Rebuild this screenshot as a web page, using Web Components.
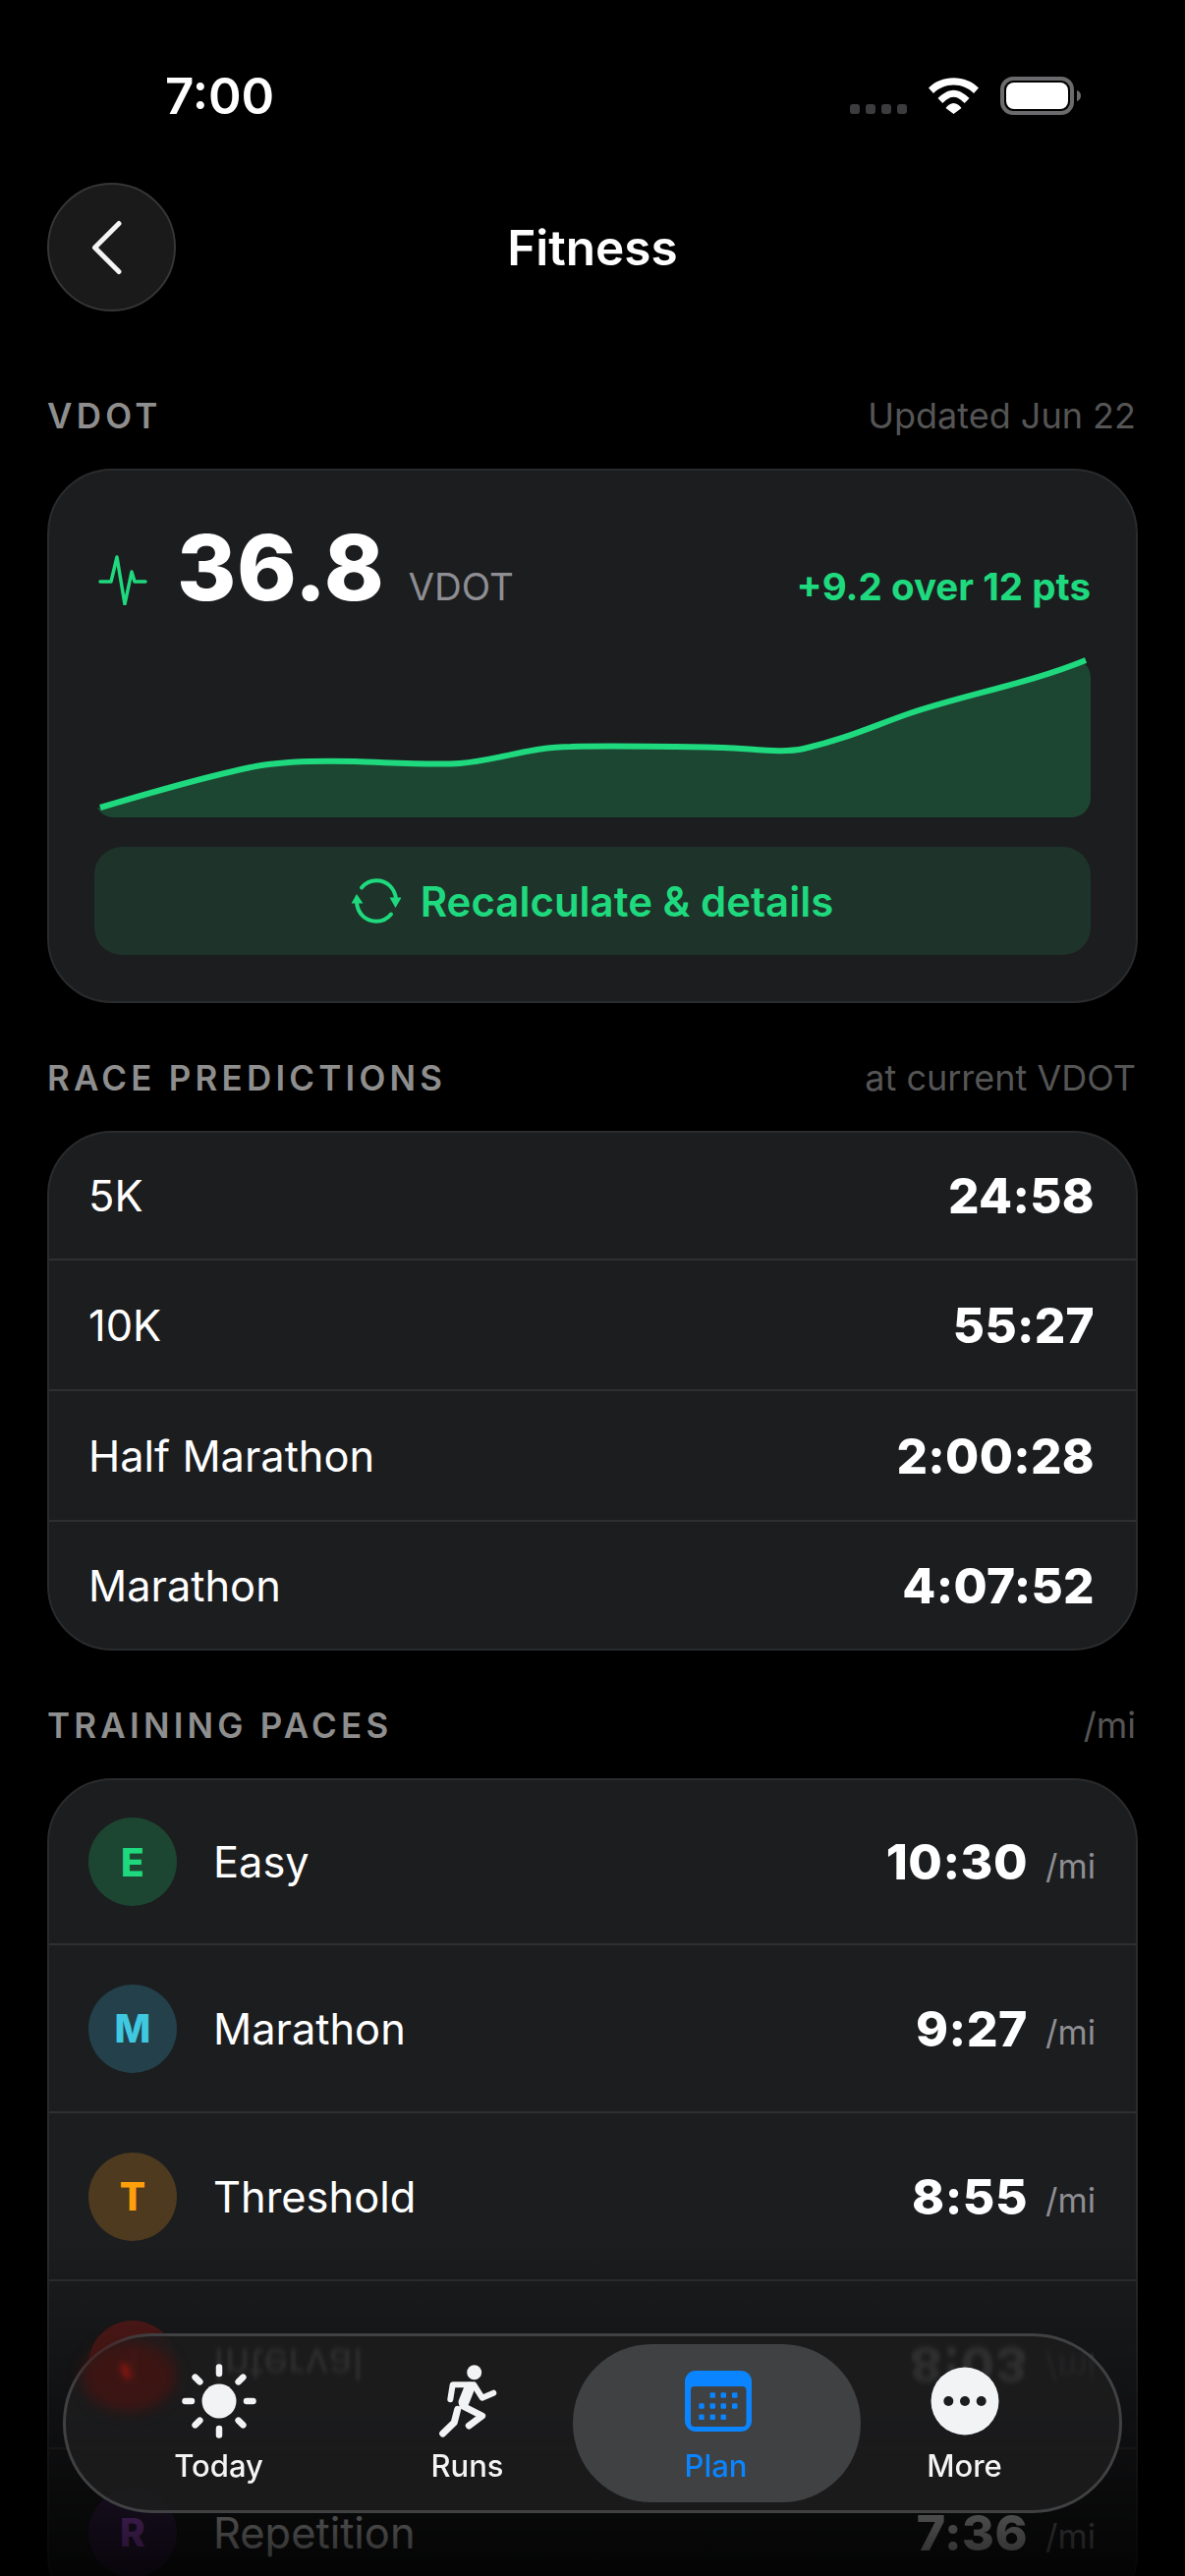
<!doctype html>
<html>
<head>
<meta charset="utf-8">
<style>
  html, body { margin: 0; padding: 0; background: #000; }
  body { font-family: Inter, "Liberation Sans", sans-serif; color: #fff; }
</style>
</head>
<body>
<fit-screen>
  <status-bar></status-bar>
  <nav-header>Fitness</nav-header>

  <section-head label="VDOT" note="Updated Jun 22"></section-head>
  <vdot-card></vdot-card>

  <section-head label="RACE PREDICTIONS" note="at current VDOT" class="later"></section-head>
  <list-card>
    <race-row name="5K" time="24:58"></race-row>
    <race-row name="10K" time="55:27"></race-row>
    <race-row name="Half Marathon" time="2:00:28"></race-row>
    <race-row name="Marathon" time="4:07:52"></race-row>
  </list-card>

  <section-head label="TRAINING PACES" note="/mi" class="later"></section-head>
  <list-card>
    <pace-row letter="E" name="Easy" time="10:30" tint="#1d4632" tone="#1fd97e"></pace-row>
    <pace-row letter="M" name="Marathon" time="9:27" tint="#23404b" tone="#40c8e0"></pace-row>
    <pace-row letter="T" name="Threshold" time="8:55" tint="#4d3a1f" tone="#ff9f0a"></pace-row>
    <pace-row letter="I" name="Interval" time="8:03" tint="#5a1d1b" tone="#ff453a" flipped></pace-row>
    <pace-row letter="R" name="Repetition" time="7:36" tint="#3d2450" tone="#bf5af2"></pace-row>
  </list-card>

  <tab-bar slot="overlay">
    <tab-item label="Today">
      <svg viewBox="0 0 76 76" width="76" height="76" fill="#f2f3f5">
        <circle cx="38" cy="38" r="17.5"/>
        <g stroke="#f2f3f5" stroke-width="6.5" stroke-linecap="round">
          <path d="M38 3.500v6.500M38 66v6.500M3.500 38H10M66 38h6.500M13.600 13.600l4.800 4.800M57.600 57.600l4.800 4.800M13.600 62.400l4.800-4.800M57.600 18.400l4.800-4.800"/>
        </g>
      </svg>
    </tab-item>
    <tab-item label="Runs">
      <svg viewBox="0 0 76 76" width="76" height="76" fill="#f2f3f5">
        <circle cx="44.700" cy="8.700" r="7.500"/>
        <g fill="none" stroke="#f2f3f5" stroke-linecap="round" stroke-linejoin="round">
          <path stroke-width="11" d="M40 24 34 39"/>
          <path stroke-width="6" d="M20.300 36.300 22.700 21.300H44.300L52.700 34.700 64.300 29.700"/>
          <path stroke-width="7" d="M33 43 52.700 53 39.300 63"/>
          <path stroke-width="7" d="M27.700 46.300 24.300 59.700 12.700 71"/>
        </g>
      </svg>
    </tab-item>
    <tab-item label="Plan" active>
      <svg viewBox="0 0 68 62" width="68" height="62" style="margin-left:4px">
        <rect x="0" y="0" width="68" height="62" rx="11" fill="#0a84ff"/>
        <rect x="6" y="16" width="56.500" height="41" rx="4" fill="#3f4142"/>
        <g fill="#0a84ff">
          <rect x="25.500" y="22.250" width="5.500" height="5.500" rx="1.200"/><rect x="36.500" y="22.250" width="5.500" height="5.500" rx="1.200"/><rect x="48" y="22.250" width="5.500" height="5.500" rx="1.200"/>
          <rect x="14.250" y="33.250" width="5.500" height="5.500" rx="1.200"/><rect x="25.500" y="33.250" width="5.500" height="5.500" rx="1.200"/><rect x="36.500" y="33.250" width="5.500" height="5.500" rx="1.200"/><rect x="48" y="33.250" width="5.500" height="5.500" rx="1.200"/>
          <rect x="14.250" y="44.500" width="5.500" height="5.500" rx="1.200"/><rect x="25.500" y="44.500" width="5.500" height="5.500" rx="1.200"/><rect x="36.500" y="44.500" width="5.500" height="5.500" rx="1.200"/>
        </g>
      </svg>
    </tab-item>
    <tab-item label="More">
      <svg viewBox="0 0 70 70" width="70" height="70">
        <circle cx="35" cy="35" r="34.500" fill="#f2f3f5"/>
        <g fill="#1c1d1e"><circle cx="18.300" cy="35" r="5"/><circle cx="35" cy="35" r="5"/><circle cx="51.700" cy="35" r="5"/></g>
      </svg>
    </tab-item>
  </tab-bar>
</fit-screen>

<script>
  // Every element keeps its own markup and style in the shadow root
  function shadow (el, html) {
    el.attachShadow({ mode: 'open' }).innerHTML = html
  }

  // ------------------
  // Screen frame
  // ------------------
  class FitScreen extends HTMLElement {
    connectedCallback () {
      shadow(this, `
        <style>
          :host { display: block; position: relative; width: 1206px; height: 2622px; overflow: hidden; background: #000; }
          .page { padding: 0 48px; }
          .fade { position: absolute; left: 0; right: 0; top: 2280px; bottom: 0; pointer-events: none;
                  background: linear-gradient(to bottom, rgba(0,0,0,0), rgba(0,0,0,.86)); }
        </style>
        <div class="page"><slot></slot></div>
        <div class="fade"></div>
        <slot name="overlay"></slot>
      `)
    }
  }

  class StatusBar extends HTMLElement {
    connectedCallback () {
      shadow(this, `
        <style>
          :host { display: flex; align-items: center; justify-content: space-between; height: 186px; box-sizing: border-box; padding: 0 96px 0 168px; margin: 0 -48px; }
          .time { font-size: 51px; font-weight: 600; line-height: 1; margin-top: 8px; }
          svg { display: block; margin-top: 8px; }
        </style>
        <span class="time">7:00</span>
        <svg width="250" height="42" viewBox="0 0 250 42">
          <g fill="#3c3c3e">
            <rect x="5" y="30" width="10" height="10" rx="3"/><rect x="21" y="30" width="10" height="10" rx="3"/><rect x="37" y="30" width="10" height="10" rx="3"/><rect x="53" y="30" width="10" height="10" rx="3"/>
          </g>
          <path fill="#fff" d="M85 13.500C91.500 7 100.500 3.300 110.500 3.300S129.500 7 136 13.500l-5 5.500C125.500 13.500 118.500 10.500 110.500 10.500S95.500 13.500 90 19zM94.500 24c4-4 9.800-8.300 16-8.300s12 4.300 16 8.300l-4.800 5c-2.800-2.700-6.800-6.300-11.200-6.300s-8.400 3.600-11.200 6.300zM102.500 34c2-2.700 4.800-5 8-5s6 2.300 8 5l-8 6z"/>
          <rect x="160" y="4" width="71" height="35" rx="11" fill="none" stroke="#6b6b6d" stroke-width="4"/>
          <rect x="164" y="8" width="63" height="27" rx="8" fill="#fff"/>
          <path fill="#6b6b6d" d="M236 16c2.500.8 4 2.800 4 5.500s-1.500 4.700-4 5.500z"/>
        </svg>
      `)
    }
  }

  class NavHeader extends HTMLElement {
    connectedCallback () {
      shadow(this, `
        <style>
          :host { display: grid; grid-template-columns: 131px 1fr 131px; align-items: center; height: 131px; }
          .back { box-sizing: border-box; width: 131px; height: 131px; border-radius: 50%; background: #1a1a1b; border: 2px solid #363637; display: flex; align-items: center; justify-content: center; }
          .title { text-align: center; font-size: 49.500px; font-weight: 600; }
        </style>
        <div class="back">
          <svg width="32" height="56" viewBox="0 0 32 56" style="margin-left:-9px"><path d="M28 3.500 3.500 28 28 52.500" fill="none" stroke="#f4f4f4" stroke-width="5" stroke-linecap="round" stroke-linejoin="round"/></svg>
        </div>
        <div class="title"><slot></slot></div>
        <div></div>
      `)
    }
  }

  class SectionHead extends HTMLElement {
    connectedCallback () {
      shadow(this, `
        <style>
          :host { display: flex; align-items: center; justify-content: space-between; height: 44px; margin: 84px 0 32px; }
          :host(.later) { margin-top: 54px; }
          .label { font-size: 35px; font-weight: 600; letter-spacing: 4.200px; color: #8e8e8e; }
          .note { font-size: 36px; color: #555; margin-right: 2px; }
        </style>
        <span class="label">${this.getAttribute('label')}</span>
        <span class="note">${this.getAttribute('note')}</span>
      `)
    }
  }

  // ------------------
  // VDOT card
  // ------------------
  class VdotCard extends HTMLElement {
    connectedCallback () {
      const curve = 'M6 152C70 133 130 116 170 109C195 105 225 104 265 105C300 106 340 109 372 107C410 104 445 90 485 90C530 89 590 90 640 91C670 92 700 97 722 92C765 82 790 70 830 56C890 36 950 26 1009 2'
      shadow(this, `
        <style>
          :host { display: block; box-sizing: border-box; height: 544px; background: #1c1d1f; border: 2px solid #2a2b2d; border-radius: 66px; padding: 46px 46px 0; color: #fff; }
          .top { display: flex; align-items: center; height: 100px; padding-left: 4px; }
          .pulse { margin-top: 30px; }
          .num { font-size: 92px; font-weight: 800; margin-left: 30px; margin-top: 6px; line-height: 1; letter-spacing: .5px; }
          .unit { font-size: 38.500px; color: #8e8e93; margin-left: 24px; margin-top: 44px; }
          .delta { margin-left: auto; font-size: 38.600px; font-weight: 700; color: #1fd97e; margin-top: 44px; }
          .chart { display: block; margin-top: 45px; overflow: visible; }
          .btn { display: flex; align-items: center; justify-content: center; gap: 20px; height: 110px; margin-top: 30px; border-radius: 28px; background: #1e3329; color: #1fd97e; font-size: 42px; font-weight: 600; }
        </style>
        <div class="top">
          <svg class="pulse" width="50" height="52" viewBox="0 0 50 52"><path d="M2 28h11l6-25 8 48 7-33 3 10h11" fill="none" stroke="#1fd97e" stroke-width="3.500" stroke-linecap="round" stroke-linejoin="round"/></svg>
          <span class="num">36.8</span>
          <span class="unit">VDOT</span>
          <span class="delta">+9.2 over 12 pts</span>
        </div>
        <svg class="chart" width="1014" height="162" viewBox="0 0 1014 162">
          <defs><clipPath id="round"><rect x="0" y="0" width="1014" height="162" rx="20"/></clipPath></defs>
          <path clip-path="url(#round)" fill="#1d4632" d="${curve}L1014 2V162H0V152z"/>
          <path fill="none" stroke="#1fd97e" stroke-width="6" stroke-linejoin="round" d="${curve}"/>
        </svg>
        <div class="btn">
          <svg width="50" height="46" viewBox="0 0 50 46" fill="none" stroke="#1fd97e" stroke-width="4" stroke-linecap="round">
            <path d="M10 9.500C14 4.500 19.500 2.200 25 2.200c11 0 19 8 20 19"/>
            <path d="M40 36.500C36 41.500 30.500 43.800 25 43.800c-11 0-19-8-20-19"/>
            <path fill="#1fd97e" stroke="none" d="M38.500 19.500h12l-6 10.500zM-.5 25.500h12L5 16z"/>
          </svg>
          <span>Recalculate &amp; details</span>
        </div>
      `)
    }
  }

  // ------------------
  // Lists
  // ------------------
  class ListCard extends HTMLElement {
    connectedCallback () {
      shadow(this, `
        <style>
          :host { display: flex; flex-direction: column; background: #1c1d1f; border: 2px solid #2a2b2d; border-radius: 66px; box-sizing: border-box; overflow: hidden; color: #fff; }
        </style>
        <slot></slot>
      `)
    }
  }

  class RaceRow extends HTMLElement {
    connectedCallback () {
      shadow(this, `
        <style>
          :host { display: flex; align-items: center; justify-content: space-between; height: 133px; box-sizing: border-box; padding: 0 42px 0 40px; border-bottom: 2px solid #2e2f31; }
          :host(:first-child) { height: 130px; }
          :host(:last-child) { height: 129px; border-bottom: 0; }
          .name { font-size: 43.400px; }
          .time { font-size: 49.500px; font-weight: 800; letter-spacing: .3px; }
        </style>
        <span class="name">${this.getAttribute('name')}</span>
        <span class="time">${this.getAttribute('time')}</span>
      `)
    }
  }

  class PaceRow extends HTMLElement {
    connectedCallback () {
      const flip = this.hasAttribute('flipped') ? 'flip' : ''
      shadow(this, `
        <style>
          :host { display: flex; align-items: center; height: 171px; flex: none; box-sizing: border-box; padding: 0 42px 0 40px; border-bottom: 2px solid #2e2f31; }
          :host(:first-child) { height: 168px; }
          .dot { width: 90px; height: 90px; border-radius: 50%; display: flex; align-items: center; justify-content: center; font-size: 39px; font-weight: 800; flex: none; }
          .name { font-size: 43.400px; margin-left: 37px; }
          .time { margin-left: auto; font-size: 50px; font-weight: 800; letter-spacing: .5px; }
          .unit { font-size: 34.500px; color: #8e8e93; margin-left: 18px; width: 50px; margin-top: 8px; }
          /* this row sits under the glass bar, which throws it back upside down */
          .flip { transform: scaleY(-1); filter: url(#smear); }
        </style>
        <svg width="0" height="0" style="position:absolute"><filter id="smear"><feGaussianBlur stdDeviation="0.8 2.5"/></filter></svg>
        <span class="dot" style="background:${this.getAttribute('tint')};color:${this.getAttribute('tone')}">${this.getAttribute('letter')}</span>
        <span class="name ${flip}">${this.getAttribute('name')}</span>
        <span class="time ${flip}">${this.getAttribute('time')}</span>
        <span class="unit ${flip}">/mi</span>
      `)
    }
  }

  // ------------------
  // Tab bar
  // ------------------
  class TabBar extends HTMLElement {
    connectedCallback () {
      shadow(this, `
        <style>
          :host { position: absolute; left: 64px; top: 2375px; width: 1078px; height: 183px; box-sizing: border-box; border-radius: 91px; border: 3px solid #404143; padding: 0 30px 0 29px; display: grid; grid-template-columns: repeat(4, 253px); background: rgba(28,29,30,.88); backdrop-filter: blur(1px); }
          .glow { position: absolute; left: 16px; top: 5px; width: 96px; height: 72px; border-radius: 50%; background: rgba(70,20,17,.75); filter: blur(7px); }
          .streak { position: absolute; left: 57px; top: 26px; width: 8px; height: 19px; border-radius: 50%; background: rgba(150,22,15,.85); filter: blur(3px); transform: rotate(-20deg); }
        </style>
        <div class="glow"></div>
        <div class="streak"></div>
        <slot></slot>
      `)
    }
  }

  class TabItem extends HTMLElement {
    connectedCallback () {
      const on = this.hasAttribute('active')
      shadow(this, `
        <style>
          :host { position: relative; display: flex; flex-direction: column; align-items: center; color: ${on ? '#0a84ff' : '#f4f4f4'}; }
          .pill { display: ${on ? 'block' : 'none'}; position: absolute; left: -19px; right: -21px; top: 8px; bottom: 8px; border-radius: 80px; background: #3f4142; }
          .icon { position: relative; height: 76px; margin-top: 28px; display: flex; align-items: center; justify-content: center; }
          .label { position: relative; font-size: 31px; font-weight: 500; margin-top: 8px; line-height: 40px; }
        </style>
        <div class="pill"></div>
        <div class="icon"><slot></slot></div>
        <div class="label">${this.getAttribute('label')}</div>
      `)
    }
  }

  customElements.define('fit-screen', FitScreen)
  customElements.define('status-bar', StatusBar)
  customElements.define('nav-header', NavHeader)
  customElements.define('section-head', SectionHead)
  customElements.define('vdot-card', VdotCard)
  customElements.define('list-card', ListCard)
  customElements.define('race-row', RaceRow)
  customElements.define('pace-row', PaceRow)
  customElements.define('tab-bar', TabBar)
  customElements.define('tab-item', TabItem)
</script>
</body>
</html>
